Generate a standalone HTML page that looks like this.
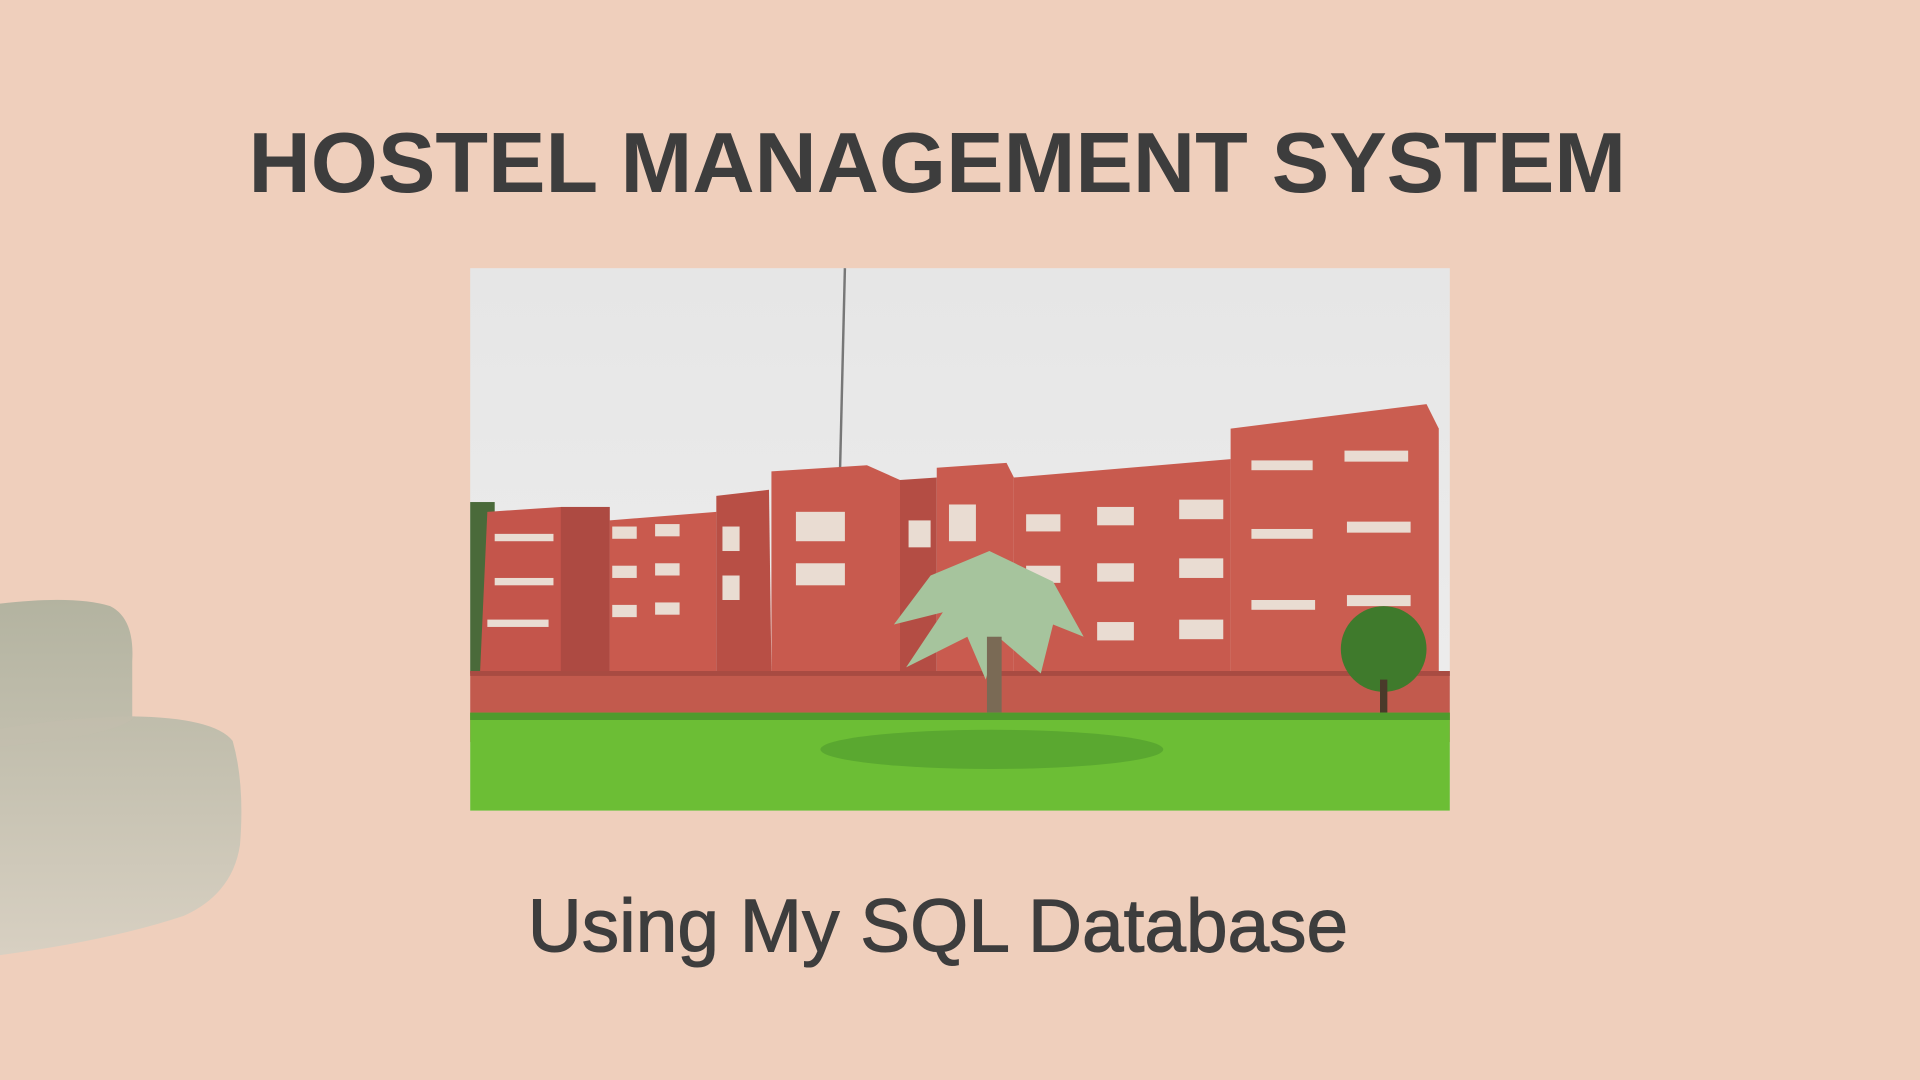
<!DOCTYPE html>
<html><head><meta charset="utf-8"><style>
html,body{margin:0;padding:0;background:#efcfbc;width:1920px;height:1080px;overflow:hidden}
svg{display:block}
</style></head><body>
<svg width="1920" height="1080" viewBox="0 0 1568 882" xmlns="http://www.w3.org/2000/svg" preserveAspectRatio="none">
<defs>
<linearGradient id="st" x1="0" y1="0" x2="0" y2="1"><stop offset="0" stop-color="#b3b3a0"/><stop offset="1" stop-color="#d8d0c2"/></linearGradient>
<linearGradient id="sky" x1="0" y1="0" x2="0" y2="1"><stop offset="0" stop-color="#e6e6e6"/><stop offset="1" stop-color="#eeeeee"/></linearGradient>
</defs>
<rect width="1568" height="882" fill="#efcfbc"/>
<path d="M0 493 Q60 486 90 495 Q110 505 108 540 L108 585 Q175 586 190 605 Q200 640 196 690 Q190 730 150 748 Q90 768 0 780 Z" fill="url(#st)"/>
<path d="M0 595 Q60 585 110 585 Q100 600 0 610 Z" fill="#c3beae" opacity="0.5"/>
<text x="203" y="157" font-family="Liberation Sans, sans-serif" font-weight="bold" font-size="70" fill="#3d3d3d" textLength="1125" lengthAdjust="spacingAndGlyphs">HOSTEL MANAGEMENT SYSTEM</text>
<text x="431" y="777" font-family="Liberation Sans, sans-serif" font-size="61" fill="#3d3d3d" stroke="#3d3d3d" stroke-width="0.9" textLength="670" lengthAdjust="spacingAndGlyphs">Using My SQL Database</text>
<g>
<rect x="384" y="219" width="800" height="443" fill="url(#sky)"/>
<line x1="690" y1="219" x2="686" y2="385" stroke="#777" stroke-width="2"/>
<rect x="384" y="410" width="20" height="140" fill="#4a6a3a"/>
<path d="M398 418 L458 414 L498 425 L498 550 L392 550 Z" fill="#c4554b"/>
<rect x="458" y="414" width="40" height="136" fill="#ad4a42"/>
<path d="M498 425 L585 418 L585 550 L498 550 Z" fill="#c95a4e"/>
<path d="M585 405 L628 400 L630 550 L585 550 Z" fill="#b84f45"/>
<path d="M630 385 L708 380 L735 392 L735 550 L630 550 Z" fill="#c85a4e"/>
<path d="M735 392 L765 390 L765 550 L735 550 Z" fill="#b44d44"/>
<path d="M765 382 L822 378 L828 390 L828 550 L765 550 Z" fill="#c95b4f"/>
<path d="M828 390 L1005 375 L1005 555 L828 555 Z" fill="#c85a4e"/>
<path d="M1005 350 L1165 330 L1175 350 L1175 555 L1005 555 Z" fill="#ca5d50"/>
<g fill="#e9dcd2">
<rect x="1022" y="376" width="50" height="8"/><rect x="1098" y="368" width="52" height="9"/>
<rect x="1022" y="432" width="50" height="8"/><rect x="1100" y="426" width="52" height="9"/>
<rect x="1022" y="490" width="52" height="8"/><rect x="1100" y="486" width="52" height="9"/>
<rect x="838" y="420" width="28" height="14"/><rect x="896" y="414" width="30" height="15"/><rect x="963" y="408" width="36" height="16"/>
<rect x="838" y="462" width="28" height="14"/><rect x="896" y="460" width="30" height="15"/><rect x="963" y="456" width="36" height="16"/>
<rect x="896" y="508" width="30" height="15"/><rect x="963" y="506" width="36" height="16"/>
<rect x="650" y="418" width="40" height="24"/><rect x="650" y="460" width="40" height="18"/>
<rect x="775" y="412" width="22" height="30"/><rect x="742" y="425" width="18" height="22"/>
<rect x="404" y="436" width="48" height="6"/><rect x="404" y="472" width="48" height="6"/><rect x="398" y="506" width="50" height="6"/>
<rect x="500" y="430" width="20" height="10"/><rect x="535" y="428" width="20" height="10"/><rect x="500" y="462" width="20" height="10"/><rect x="535" y="460" width="20" height="10"/><rect x="500" y="494" width="20" height="10"/><rect x="535" y="492" width="20" height="10"/>
<rect x="590" y="430" width="14" height="20"/><rect x="590" y="470" width="14" height="20"/>
</g>
<rect x="384" y="548" width="800" height="58" fill="#c25a4d"/>
<rect x="384" y="548" width="800" height="4" fill="#a84b42"/>
<circle cx="1130" cy="530" r="35" fill="#3f7a2c"/>
<rect x="1127" y="555" width="6" height="50" fill="#4a3a2a"/>
<path d="M808 450 L760 470 L730 510 L770 500 L740 545 L790 520 L805 555 L815 520 L850 550 L860 510 L885 520 L860 475 Z" fill="#a6c49d"/>
<rect x="806" y="520" width="12" height="85" fill="#7a6a55"/>
<rect x="384" y="582" width="800" height="80" fill="#6cbe35"/>
<rect x="384" y="582" width="800" height="6" fill="#4f9a2d"/>
<ellipse cx="810" cy="612" rx="140" ry="16" fill="#5aa830"/>
</g>
</svg>
</body></html>
